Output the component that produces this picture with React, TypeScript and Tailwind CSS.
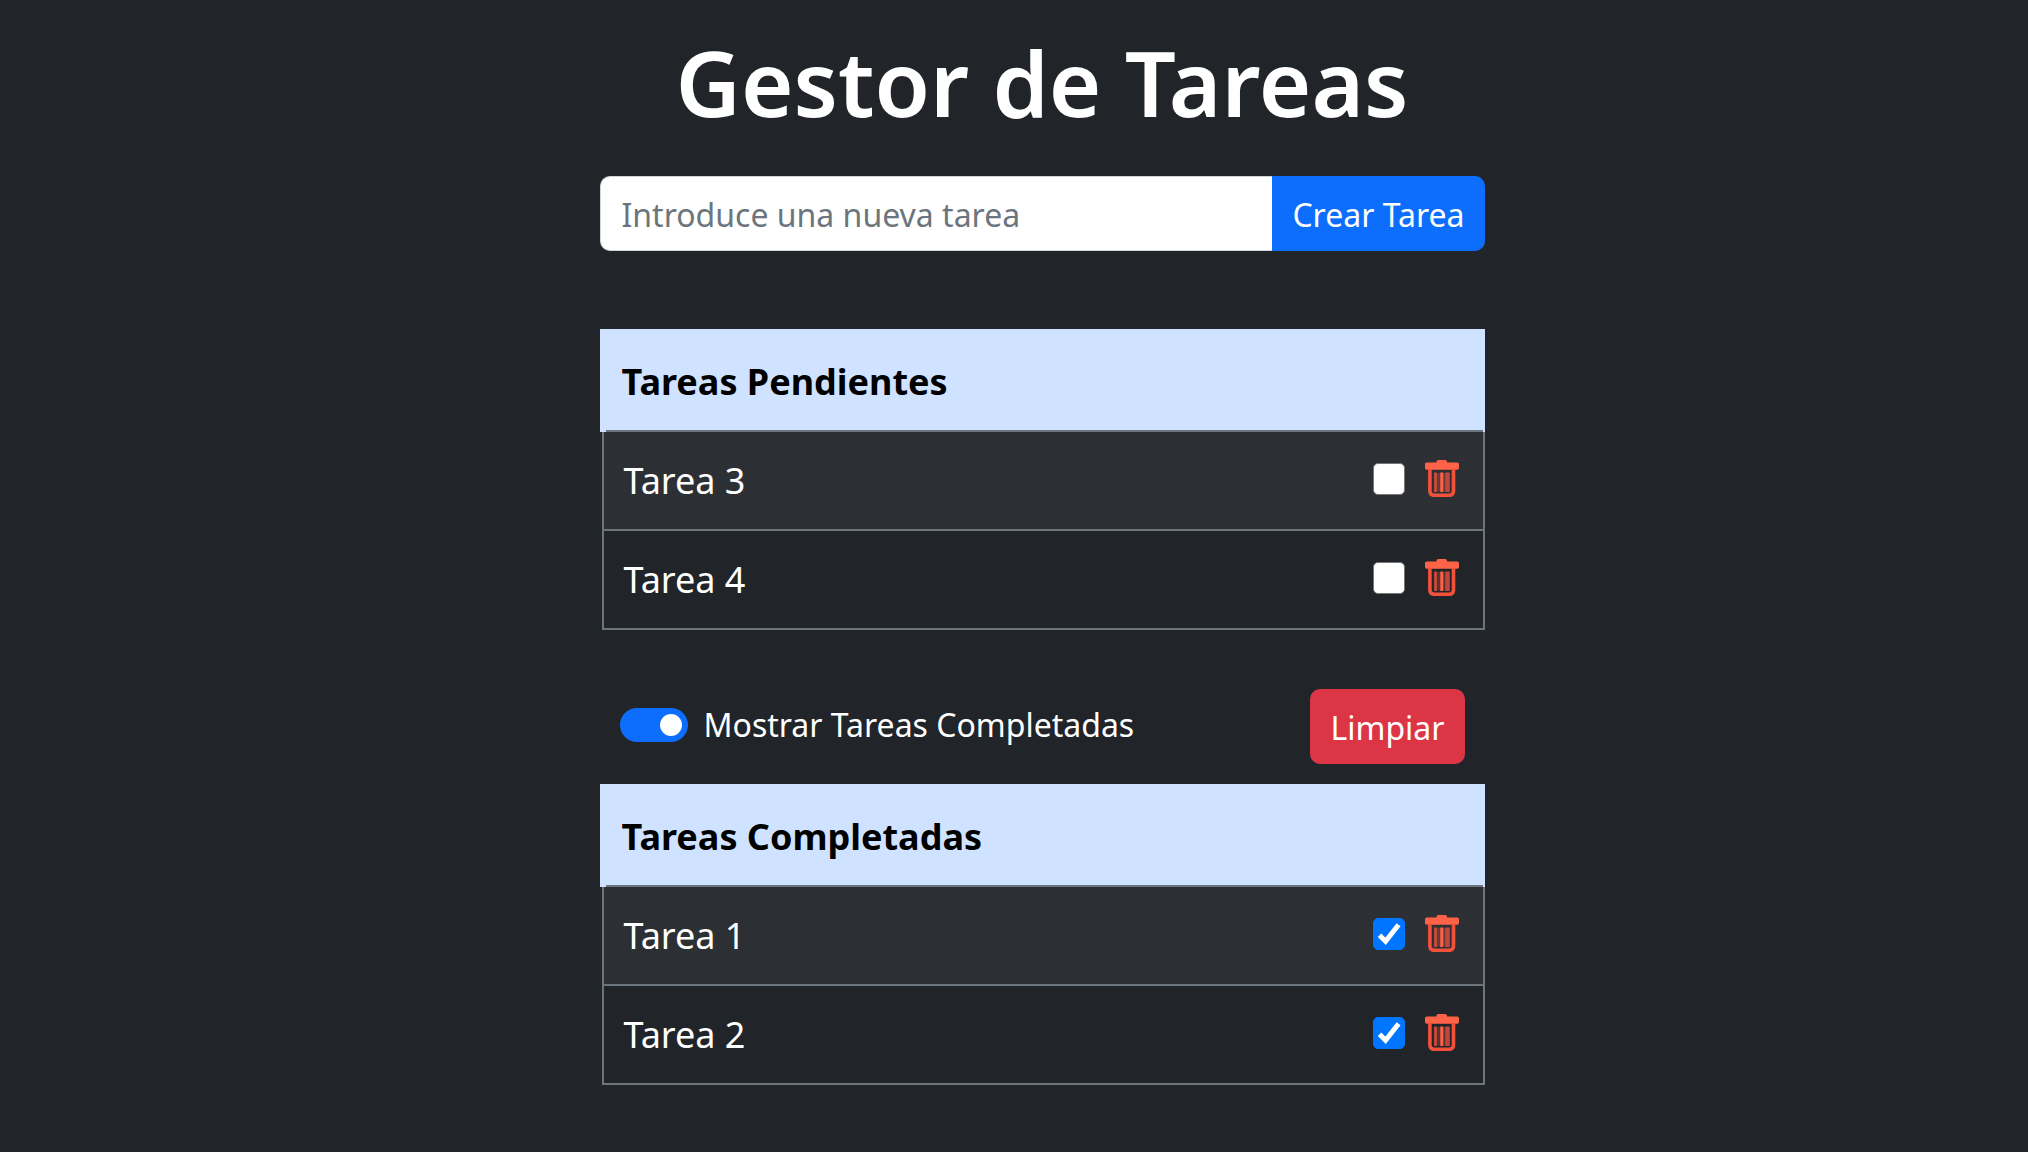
import { useState } from "react"
import type { FormEvent } from "react"

type TareaType = {
    id: number
    nombre: string
    completada: boolean
}

const tareasData: TareaType[] = [
    { id: 1, nombre: "Tarea 1", completada: true },
    { id: 2, nombre: "Tarea 2", completada: true },
    { id: 3, nombre: "Tarea 3", completada: false },
    { id: 4, nombre: "Tarea 4", completada: false },
]

function TrashIcon() {
    return (
        <svg viewBox="0 0 34 37" className="h-[37px] w-[34px]" fill="none" aria-hidden="true">
            <path d="M11.5 3V1.8Q11.5 0 13.3 0H20.2Q22 0 22 1.8V3z" fill="#ff6347" />
            <rect x="0" y="2.4" width="34" height="7.4" rx="1.8" fill="#ff6347" />
            <path d="M4.9 9V30.8Q4.9 35.3 9.4 35.3H24Q28.5 35.3 28.5 30.8V9" stroke="#f4513b" strokeWidth="3.6" />
            <path d="M8.8 13H24.8V31.5H8.8z" fill="#ff6347" fillOpacity=".25" />
            <path d="M10.5 12.5V32" stroke="#d9483a" strokeWidth="2.6" />
            <path d="M22.5 12.5V32" stroke="#c4453c" strokeWidth="4.4" />
            <path d="M16.8 12.5V32" stroke="#ff6347" strokeWidth="3" />
        </svg>
    )
}

function CheckIcon() {
    return (
        <svg viewBox="0 0 32 32" className="pointer-events-none absolute inset-0 hidden size-8 peer-checked:block" fill="none" aria-hidden="true">
            <path d="M6.5 17.2L12.6 23.2L25.6 6.8" stroke="#fff" strokeWidth="5" />
        </svg>
    )
}

type TablaProps = {
    titulo: string
    tareas: TareaType[]
    onToggle: (id: number) => void
    onDelete: (id: number) => void
}

function TablaTareas({ titulo, tareas, onToggle, onDelete }: TablaProps) {
    return (
        <table className="w-full border-collapse text-4xl leading-[57px]">
            <thead>
                <tr>
                    <th colSpan={2} className="border-r-2 border-l-6 border-[#cfe2ff] bg-[#cfe2ff] px-4 pt-6 pb-5 text-left font-bold text-black">
                        {titulo}
                    </th>
                </tr>
            </thead>
            <tbody>
                {tareas.map(tarea => (
                    <tr key={tarea.id} className="border-2 border-[#6c757d] odd:bg-[#2c3034]">
                        <td className="px-5 py-5">{tarea.nombre}</td>
                        <td className="px-6">
                            <div className="flex items-center justify-end gap-5 pb-1">
                                <div className="relative size-8">
                                    <input
                                        type="checkbox"
                                        aria-label={tarea.nombre}
                                        checked={tarea.completada}
                                        onChange={() => onToggle(tarea.id)}
                                        className="peer block size-8 appearance-none rounded-[5px] border border-[#767676] bg-white checked:border-[#0075ff] checked:bg-[#0075ff]"
                                    />
                                    <CheckIcon />
                                </div>
                                <button
                                    type="button"
                                    aria-label={`Eliminar ${tarea.nombre}`}
                                    onClick={() => onDelete(tarea.id)}
                                >
                                    <TrashIcon />
                                </button>
                            </div>
                        </td>
                    </tr>
                ))}
            </tbody>
        </table>
    )
}

export default function App() {

    const [tareas, setTareas] = useState<TareaType[]>(tareasData)
    const [nueva, setNueva] = useState("")
    const [mostrar, setMostrar] = useState(true)

    const crearTarea = (e: FormEvent) => {
        e.preventDefault()
        if (!nueva.trim()) return
        setTareas([...tareas, { id: Date.now(), nombre: nueva.trim(), completada: false }])
        setNueva("")
    }

    const toggleTarea = (id: number) => {
        setTareas(tareas.map(t => t.id === id ? { ...t, completada: !t.completada } : t))
    }

    const borrarTarea = (id: number) => {
        setTareas(tareas.filter(t => t.id !== id))
    }

    return (
        <div className="min-h-screen bg-[#212529] pl-14 font-['Noto_Sans',sans-serif] text-white">
            <main className="mx-auto max-w-[885px] pt-5">
                <h1 className="text-center text-[90px] leading-[124px] font-semibold">Gestor de Tareas</h1>

                <form onSubmit={crearTarea} className="mt-8 flex h-[75px] text-[32px]">
                    <input
                        type="text"
                        aria-label="Nueva tarea"
                        placeholder="Introduce una nueva tarea"
                        value={nueva}
                        onChange={e => setNueva(e.target.value)}
                        className="min-w-0 flex-1 rounded-l-[10px] border border-r-0 border-[#ced4da] bg-white px-[21px] pt-0.5 text-[#212529] placeholder:text-[#6c757d]"
                    />
                    <button type="submit" className="rounded-r-[10px] bg-[#0d6efd] px-5 pt-0.5">
                        Crear Tarea
                    </button>
                </form>

                {/* Pendientes */}
                <section className="mt-[78px]">
                    <TablaTareas
                        titulo="Tareas Pendientes"
                        tareas={tareas.filter(t => !t.completada)}
                        onToggle={toggleTarea}
                        onDelete={borrarTarea}
                    />
                </section>

                <div className="mt-[59px] mb-5 flex items-center justify-between px-5 text-[32px]">
                    <label className="flex items-center gap-4 pb-1">
                        <input
                            type="checkbox"
                            role="switch"
                            checked={mostrar}
                            onChange={() => setMostrar(!mostrar)}
                            className="peer sr-only"
                        />
                        <span className="flex h-[34px] w-[68px] items-center rounded-full bg-white/25 px-[6px] peer-checked:justify-end peer-checked:bg-[#0d6efd]">
                            <span className="size-[22px] rounded-full bg-white" />
                        </span>
                        Mostrar Tareas Completadas
                    </label>
                    <button
                        type="button"
                        onClick={() => setTareas(tareas.filter(t => !t.completada))}
                        className="h-[75px] rounded-[10px] bg-[#dc3545] px-5 pt-0.5"
                    >
                        Limpiar
                    </button>
                </div>

                {/* Completadas */}
                {mostrar && (
                    <section>
                        <TablaTareas
                            titulo="Tareas Completadas"
                            tareas={tareas.filter(t => t.completada)}
                            onToggle={toggleTarea}
                            onDelete={borrarTarea}
                        />
                    </section>
                )}
            </main>
        </div>
    )
}
